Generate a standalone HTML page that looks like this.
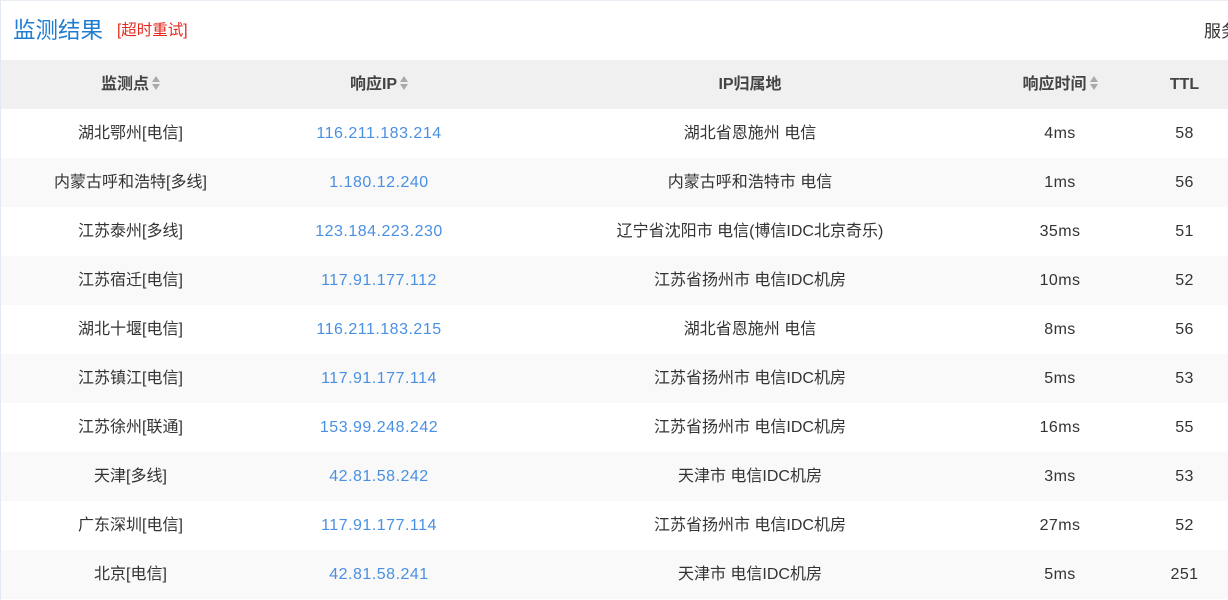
<!DOCTYPE html>
<html><head><meta charset="utf-8"><style>
body{margin:0;width:1228px;height:600px;overflow:hidden;background:#fff;font-family:"Liberation Sans","Noto Sans CJK SC",sans-serif;}
.wrap{position:absolute;left:0;top:0;width:1260px;height:600px;border-top:1px solid #e8edf3;border-left:1px solid #e3e9f0;box-sizing:border-box;}
.head{height:59px;position:relative;}
.title{position:absolute;left:12px;top:15px;font-size:22.5px;color:#1f7dd3;line-height:30px;}
.retry{position:absolute;left:116px;top:20px;font-size:15.5px;color:#e52b1f;line-height:20px;}
.srv{position:absolute;left:1203px;top:19px;font-size:17px;color:#333;white-space:nowrap;line-height:24px;}
table{border-collapse:collapse;width:1250px;table-layout:fixed;font-size:16px;color:#333;}
th{height:49px;background:#f0f0f0;font-weight:bold;color:#444;padding:0;font-size:16px;line-height:20px;}
td{height:49px;text-align:center;padding:0;line-height:20px;}
tr.g td{background:#f9f9f9;}
td.ip{color:#4a90e2;letter-spacing:0.5px;}
td.n{letter-spacing:0.4px;}
.s{display:inline-block;vertical-align:middle;margin-left:3px;width:8px;height:14px;position:relative;top:-1px;}
.s:before,.s:after{content:"";position:absolute;left:0;border-left:4px solid transparent;border-right:4px solid transparent;}
.s:before{top:0;border-bottom:6px solid #aaa;}
.s:after{bottom:0;border-top:6px solid #aaa;}
</style></head><body><div class="wrap">
<div class="head"><span class="title">监测结果</span><span class="retry">[超时重试]</span><span class="srv">服务器</span></div>
<table>
<colgroup><col style="width:259px"><col style="width:238px"><col style="width:504px"><col style="width:116px"><col style="width:133px"></colgroup>
<tr><th>监测点<span class="s"></span></th><th>响应IP<span class="s"></span></th><th>IP归属地</th><th>响应时间<span class="s"></span></th><th>TTL</th></tr>
<tr><td>湖北鄂州[电信]</td><td class="ip">116.211.183.214</td><td>湖北省恩施州 电信</td><td class="n">4ms</td><td class="n">58</td></tr>
<tr class="g"><td>内蒙古呼和浩特[多线]</td><td class="ip">1.180.12.240</td><td>内蒙古呼和浩特市 电信</td><td class="n">1ms</td><td class="n">56</td></tr>
<tr><td>江苏泰州[多线]</td><td class="ip">123.184.223.230</td><td>辽宁省沈阳市 电信(博信IDC北京奇乐)</td><td class="n">35ms</td><td class="n">51</td></tr>
<tr class="g"><td>江苏宿迁[电信]</td><td class="ip">117.91.177.112</td><td>江苏省扬州市 电信IDC机房</td><td class="n">10ms</td><td class="n">52</td></tr>
<tr><td>湖北十堰[电信]</td><td class="ip">116.211.183.215</td><td>湖北省恩施州 电信</td><td class="n">8ms</td><td class="n">56</td></tr>
<tr class="g"><td>江苏镇江[电信]</td><td class="ip">117.91.177.114</td><td>江苏省扬州市 电信IDC机房</td><td class="n">5ms</td><td class="n">53</td></tr>
<tr><td>江苏徐州[联通]</td><td class="ip">153.99.248.242</td><td>江苏省扬州市 电信IDC机房</td><td class="n">16ms</td><td class="n">55</td></tr>
<tr class="g"><td>天津[多线]</td><td class="ip">42.81.58.242</td><td>天津市 电信IDC机房</td><td class="n">3ms</td><td class="n">53</td></tr>
<tr><td>广东深圳[电信]</td><td class="ip">117.91.177.114</td><td>江苏省扬州市 电信IDC机房</td><td class="n">27ms</td><td class="n">52</td></tr>
<tr class="g"><td>北京[电信]</td><td class="ip">42.81.58.241</td><td>天津市 电信IDC机房</td><td class="n">5ms</td><td class="n">251</td></tr>
</table></div></body></html>
